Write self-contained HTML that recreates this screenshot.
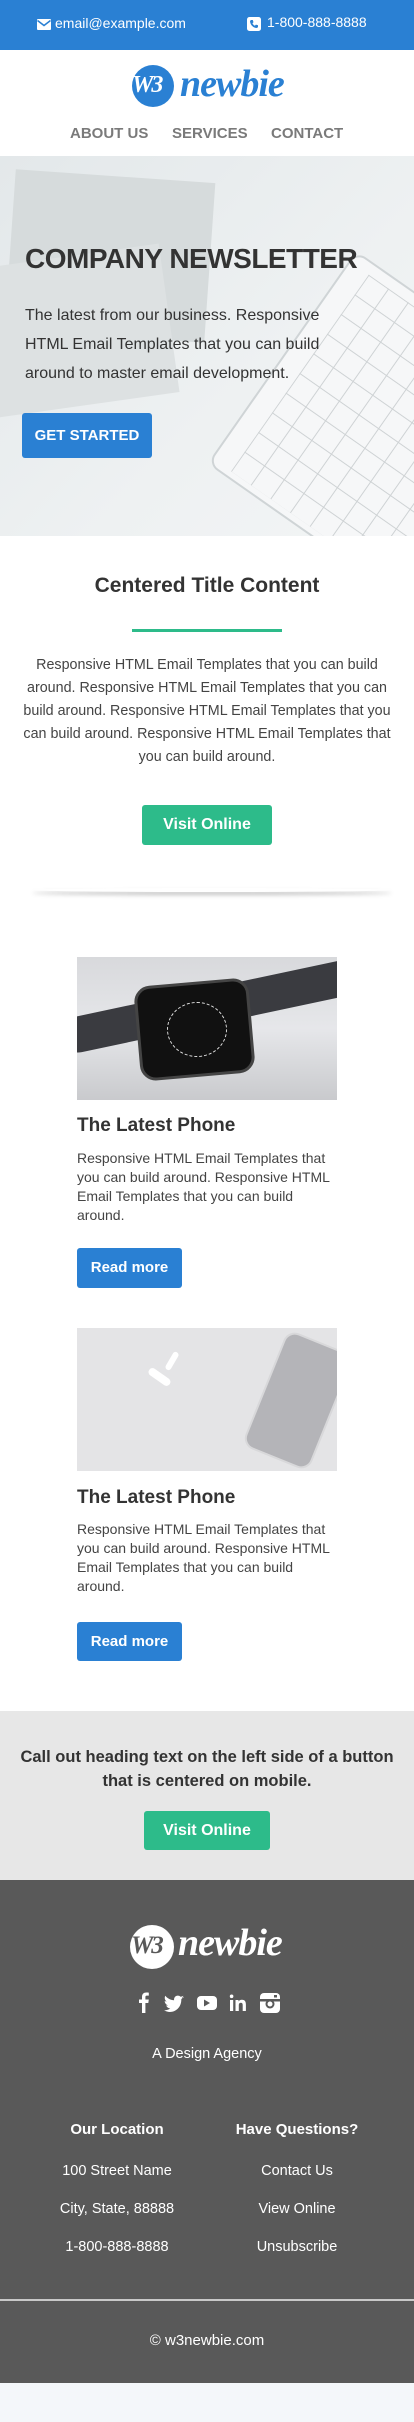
<!DOCTYPE html>
<html><head><meta charset="utf-8">
<style>
*{margin:0;padding:0;box-sizing:border-box}
body{width:414px;height:2422px;background:#fff;font-family:"Liberation Sans",sans-serif;color:#333;position:relative;overflow:hidden}
.abs{position:absolute}
.c{text-align:center;left:0;width:414px}
.btn{position:absolute;border-radius:3px;color:#fff;font-weight:bold;text-align:center}
</style></head><body>
<div class="abs" style="left:0;top:2383px;width:414px;height:39px;background:#f4f7fa"></div>
<!-- top bar -->
<div class="abs" style="left:0;top:0;width:414px;height:50px;background:#2a80d3"></div>
<svg class="abs" style="left:37px;top:19px" width="14" height="11" viewBox="0 0 14 11"><rect width="14" height="11" rx="1" fill="#fff"/><path d="M0.5 1.5 L7 6.5 L13.5 1.5" stroke="#2a80d3" stroke-width="1.5" fill="none"/></svg>
<div class="abs" style="left:55px;top:15px;font-size:14px;color:#fff">email@example.com</div>
<svg class="abs" style="left:247px;top:17px" width="14" height="14" viewBox="0 0 14 14"><rect width="14" height="14" rx="2.5" fill="#fff"/><path d="M4 3 L5.8 3 L6.5 5.2 L5.4 6.2 Q6.3 8 7.9 8.7 L8.9 7.6 L11 8.3 L11 10 Q10.5 11 9.3 11 Q4.2 10.3 3 4.8 Q3 3.3 4 3Z" fill="#2a80d3"/></svg>
<div class="abs" style="left:267px;top:14px;font-size:14px;color:#fff">1-800-888-8888</div>
<!-- header -->
<div class="abs" style="left:132px;top:65px;width:42px;height:42px;border-radius:50%;background:#2a80d3"></div>
<div class="abs" style="left:132px;top:72px;font-size:24px;font-style:italic;font-weight:bold;color:#fff;font-family:'Liberation Serif',serif;letter-spacing:-2px">W3</div>
<div class="abs" style="left:180px;top:62px;font-size:38px;font-style:italic;font-weight:bold;color:#2a80d3;font-family:'Liberation Serif',serif;letter-spacing:-1px">newbie</div>
<div class="abs" style="left:70px;top:125px;font-size:15px;font-weight:bold;color:#7a7a7a">ABOUT US</div>
<div class="abs" style="left:172px;top:125px;font-size:15px;font-weight:bold;color:#7a7a7a">SERVICES</div>
<div class="abs" style="left:271px;top:125px;font-size:15px;font-weight:bold;color:#7a7a7a">CONTACT</div>
<!-- hero -->
<div class="abs" style="left:0;top:156px;width:414px;height:380px;background:linear-gradient(135deg,#e3e8ea,#eef1f2 60%,#f3f5f6);overflow:hidden">
  <div class="abs" style="left:10px;top:20px;width:200px;height:160px;background:#d6dbdc;transform:rotate(4deg)"></div>
  <div class="abs" style="left:-20px;top:100px;width:190px;height:150px;background:#dde1e2;transform:rotate(-8deg)"></div>
  <div class="abs" style="left:260px;top:140px;width:240px;height:260px;background:#f6f7f8;border:2px solid #cfd4d6;transform:rotate(35deg);border-radius:12px"></div>
  <div class="abs" style="left:280px;top:160px;width:220px;height:240px;transform:rotate(35deg);background-image:linear-gradient(#c5cacc 1px,transparent 1px),linear-gradient(90deg,#c5cacc 1px,transparent 1px);background-size:24px 24px;opacity:.8"></div>
</div>
<div class="abs" style="left:25px;top:243px;font-size:28px;font-weight:bold;color:#333;letter-spacing:-0.5px">COMPANY NEWSLETTER</div>
<div class="abs" style="left:25px;top:301px;width:320px;font-size:16px;line-height:29px;color:#333">The latest from our business. Responsive HTML Email Templates that you can build around to master email development.</div>
<div class="btn" style="left:22px;top:413px;width:130px;height:45px;background:#2a80d3;font-size:15px;line-height:45px">GET STARTED</div>
<!-- centered -->
<div class="abs c" style="top:574px;font-size:21px;font-weight:bold">Centered Title Content</div>
<div class="abs" style="left:132px;top:629px;width:150px;height:3px;background:#2dbb8a"></div>
<div class="abs c" style="top:654px;left:20px;width:374px;font-size:14.3px;line-height:23px;color:#444">Responsive HTML Email Templates that you can build around. Responsive HTML Email Templates that you can build around. Responsive HTML Email Templates that you can build around. Responsive HTML Email Templates that you can build around.</div>
<div class="btn" style="left:142px;top:805px;width:130px;height:40px;background:#2dbb8a;font-size:16px;line-height:40px">Visit Online</div>
<div class="abs" style="left:32px;top:888px;width:360px;height:4px;border-radius:50%;box-shadow:0 3px 4px rgba(0,0,0,.25)"></div>
<!-- card 1 -->
<div class="abs" style="left:77px;top:957px;width:260px;height:143px;background:linear-gradient(180deg,#d8d9dc,#e6e7ea 50%,#c9cacd);overflow:hidden">
  <div class="abs" style="left:-20px;top:30px;width:320px;height:36px;background:#3a3b40;border-radius:20px;transform:rotate(-12deg)"></div>
  <div class="abs" style="left:60px;top:25px;width:115px;height:95px;background:#111;border-radius:16px;border:3px solid #444;transform:rotate(-5deg)"></div>
  <div class="abs" style="left:90px;top:45px;width:60px;height:55px;border-radius:50%;border:1px dashed #ddd"></div>
</div>
<div class="abs" style="left:77px;top:1115px;font-size:19px;font-weight:bold">The Latest Phone</div>
<div class="abs" style="left:77px;top:1149px;width:255px;font-size:14px;line-height:19px;color:#444">Responsive HTML Email Templates that you can build around. Responsive HTML Email Templates that you can build around.</div>
<div class="btn" style="left:77px;top:1248px;width:105px;height:40px;background:#2a80d3;font-size:15px;line-height:40px">Read more</div>
<!-- card 2 -->
<div class="abs" style="left:77px;top:1328px;width:260px;height:143px;background:#e4e4e6;overflow:hidden">
  <div class="abs" style="left:185px;top:10px;width:72px;height:125px;background:#b4b4b8;border:2px solid #d8d8da;border-radius:12px;transform:rotate(22deg)"></div>
  <div class="abs" style="left:70px;top:45px;width:25px;height:8px;background:#fff;border-radius:4px;transform:rotate(35deg)"></div>
  <div class="abs" style="left:85px;top:30px;width:20px;height:6px;background:#fff;border-radius:3px;transform:rotate(-60deg)"></div>
</div>
<div class="abs" style="left:77px;top:1487px;font-size:19px;font-weight:bold">The Latest Phone</div>
<div class="abs" style="left:77px;top:1520px;width:255px;font-size:14px;line-height:19px;color:#444">Responsive HTML Email Templates that you can build around. Responsive HTML Email Templates that you can build around.</div>
<div class="btn" style="left:77px;top:1622px;width:105px;height:39px;background:#2a80d3;font-size:15px;line-height:39px">Read more</div>
<!-- callout -->
<div class="abs" style="left:0;top:1711px;width:414px;height:169px;background:#e7e7e7"></div>
<div class="abs c" style="top:1745px;font-size:16.5px;font-weight:bold;line-height:24px;color:#333">Call out heading text on the left side of a button<br>that is centered on mobile.</div>
<div class="btn" style="left:144px;top:1811px;width:126px;height:39px;background:#2dbb8a;font-size:16px;line-height:39px">Visit Online</div>
<!-- footer -->
<div class="abs" style="left:0;top:1880px;width:414px;height:503px;background:#595959"></div>
<div class="abs" style="left:130px;top:1925px;width:44px;height:44px;border-radius:50%;background:#fff"></div>
<div class="abs" style="left:131px;top:1932px;font-size:25px;font-style:italic;font-weight:bold;color:#595959;font-family:'Liberation Serif',serif;letter-spacing:-2px">W3</div>
<div class="abs" style="left:178px;top:1921px;font-size:38px;font-style:italic;font-weight:bold;color:#fff;font-family:'Liberation Serif',serif;letter-spacing:-1px">newbie</div>
<svg class="abs" style="left:136px;top:1991px" width="146" height="24" viewBox="0 0 146 24">
 <path d="M6 22V12H3V8.5h3V6c0-3 1.7-4.5 4.3-4.5 1.2 0 2.2.1 2.5.1v3h-1.8c-1.4 0-1.6.7-1.6 1.6v2.3h3.4l-.5 3.5H9.4v10z" fill="#fff"/>
 <path d="M48 6.5c-.8.4-1.6.6-2.5.7.9-.5 1.6-1.4 1.9-2.4-.8.5-1.8.9-2.7 1-1.7-1.8-4.6-1.6-6 .4-.6.9-.8 2-.6 3.1-3.5-.2-6.6-1.8-8.8-4.5-1.100 2-.5 4.5 1.4 5.7-.7 0-1.4-.2-2-.5 0 2.1 1.5 3.9 3.5 4.3-.6.2-1.3.2-2 .1.6 1.8 2.2 3 4.1 3-1.8 1.4-4 2.1-6.3 1.9 7.6 4.6 17.3-.6 17.3-10.5v-.5c.8-.6 1.4-1.3 1.900-2z" fill="#fff"/>
 <rect x="61" y="5" width="20" height="14" rx="4" fill="#fff"/><path d="M68 8.5v7l6-3.5z" fill="#595959"/>
 <path d="M94 9h3.2v11H94zM95.6 3.5a1.8 1.8 0 110 3.6 1.8 1.8 0 010-3.6zM99.5 9h3v1.5c.5-1 1.7-1.8 3.4-1.8 3.4 0 4 2.2 4 5.1V20h-3.2v-5.3c0-1.3 0-2.9-1.8-2.9s-2.1 1.4-2.1 2.8V20h-3.3z" fill="#fff"/>
 <rect x="124" y="2" width="20" height="20" rx="4" fill="#fff"/><rect x="124" y="8" width="20" height="2.5" fill="#595959"/><circle cx="134" cy="13" r="4.5" fill="#595959"/><circle cx="134" cy="13" r="2.5" fill="#fff"/><rect x="138" y="4" width="3" height="2.5" fill="#595959"/>
</svg>
<div class="abs c" style="top:2046px;font-size:14.5px;color:#fff">A Design Agency</div>
<div class="abs" style="left:17px;width:200px;top:2121px;text-align:center;font-size:15px;font-weight:bold;color:#fff">Our Location</div>
<div class="abs" style="left:197px;width:200px;top:2121px;text-align:center;font-size:15px;font-weight:bold;color:#fff">Have Questions?</div>
<div class="abs" style="left:17px;width:200px;top:2152px;text-align:center;font-size:14.5px;line-height:38px;color:#fff">100 Street Name<br>City, State, 88888<br>1-800-888-8888</div>
<div class="abs" style="left:197px;width:200px;top:2152px;text-align:center;font-size:14.5px;line-height:38px;color:#fff">Contact Us<br>View Online<br>Unsubscribe</div>
<div class="abs" style="left:0;top:2299px;width:414px;height:2px;background:#c8c8c8"></div>
<div class="abs c" style="top:2332px;font-size:15px;color:#fff">© w3newbie.com</div>
</body></html>
